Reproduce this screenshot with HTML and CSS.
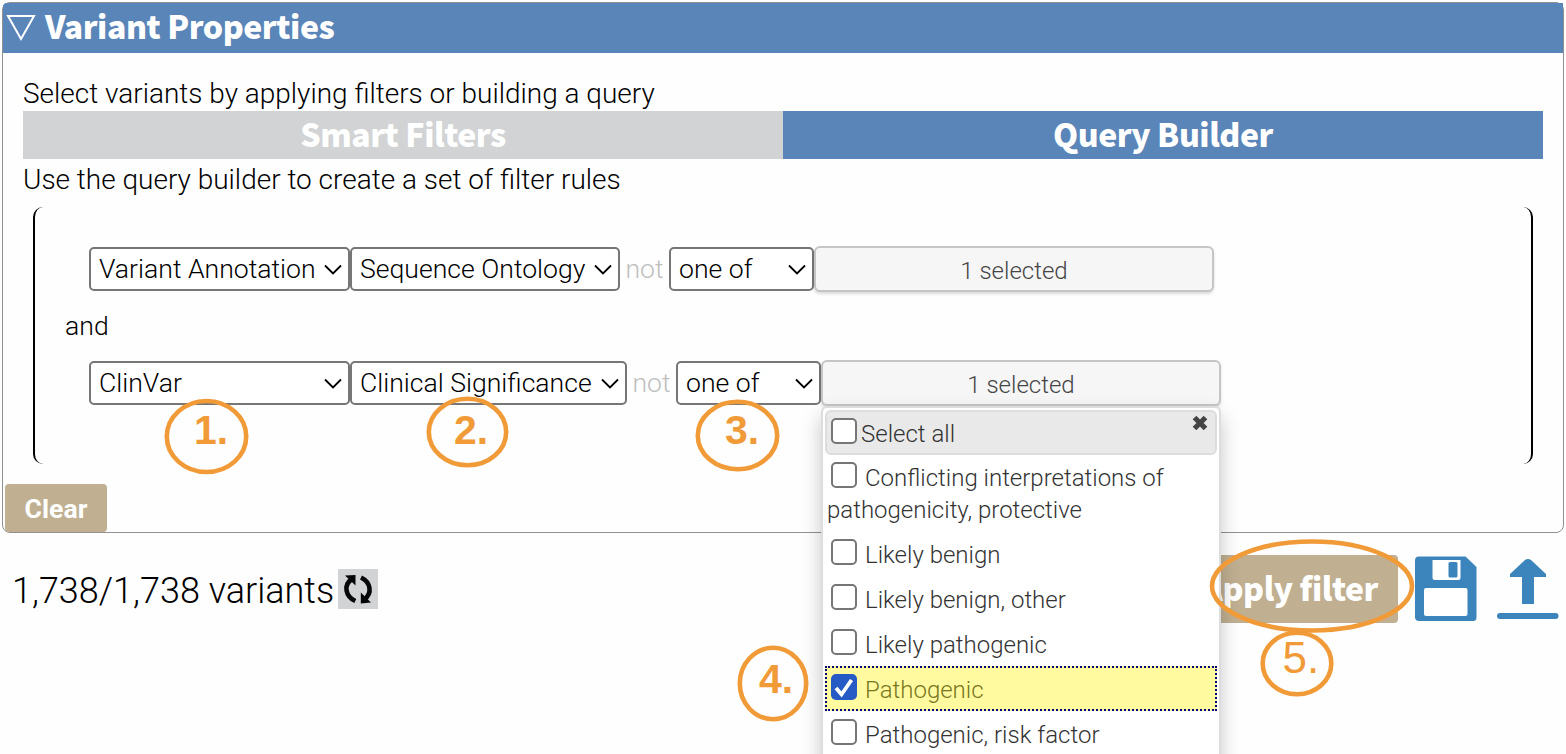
FILE: index.html
```html
<!DOCTYPE html>
<html lang="en">
<head>
<meta charset="utf-8">
<title>Variant Properties</title>
<link rel="stylesheet" href="styles.css">
</head>
<body>
<main class="page">
  <section class="panel">
    <header class="panel-head">
      <svg class="toggle" width="30" height="28" viewBox="0 0 30 28"><path d="M2 2H28L15 25Z" fill="none" stroke="#fff" stroke-width="2"/></svg>
      <h1 class="title">Variant Properties</h1>
    </header>
    <div class="panel-body">
      <p class="intro">Select variants by applying filters or building a query</p>
      <nav class="tabs">
        <div class="tab">Smart Filters</div>
        <div class="tab active">Query Builder</div>
      </nav>
      <p class="hint">Use the query builder to create a set of filter rules</p>
      <div class="group">
        <div class="rule">
          <div class="select w-source"><span>Variant Annotation</span><svg class="chev" viewBox="0 0 18 12"><path d="M1 1.5L9 9.5L17 1.5"/></svg></div>
          <div class="select w-so"><span>Sequence Ontology</span><svg class="chev" viewBox="0 0 18 12"><path d="M1 1.5L9 9.5L17 1.5"/></svg></div>
          <span class="not">not</span>
          <div class="select w-op"><span>one of</span><svg class="chev" viewBox="0 0 18 12"><path d="M1 1.5L9 9.5L17 1.5"/></svg></div>
          <div class="multi">1 selected</div>
        </div>
        <div class="and">and</div>
        <div class="rule">
          <div class="select w-source"><span>ClinVar</span><svg class="chev" viewBox="0 0 18 12"><path d="M1 1.5L9 9.5L17 1.5"/></svg></div>
          <div class="select w-cs"><span>Clinical Significance</span><svg class="chev" viewBox="0 0 18 12"><path d="M1 1.5L9 9.5L17 1.5"/></svg></div>
          <span class="not">not</span>
          <div class="select w-op"><span>one of</span><svg class="chev" viewBox="0 0 18 12"><path d="M1 1.5L9 9.5L17 1.5"/></svg></div>
          <div class="multi">1 selected</div>
        </div>
      </div>
    </div>
    <button class="clear">Clear</button>
  </section>

  <footer class="bar">
    <span class="count">1,738/1,738 variants</span>
    <span class="reload"><svg width="40" height="40" viewBox="0 0 40 40"><g fill="none" stroke="#060608" stroke-width="4.6"><path d="M17.3 32C7.500 27.500 5 16 14 10"/><path d="M23 8.500C32.500 13 35 24.500 26 30.500"/></g><path d="M7 6.500L17.500 6V16.500Z" fill="#060608"/><path d="M33 33.500L22.800 34.500V23.500Z" fill="#060608"/></svg></span>
    <button class="apply">Apply filter</button>
    <svg class="save" width="62" height="66" viewBox="0 0 62 66"><path d="M4 .5H50.500L61.500 11V61.500Q61.500 65 58 65H4Q0 65 0 61V4.500Q0 .5 4 .5Z" fill="#3b85bc"/><path d="M17.500 4H45.500V21.500Q45.500 24 43 24H20Q17.500 24 17.500 21.500Z" fill="#fff"/><rect x="33.500" y="6" width="9" height="15.500" rx="1.500" fill="#3b85bc"/><rect x="9" y="32" width="43.500" height="28" rx="2" fill="#fff"/></svg>
    <svg class="upload" width="62" height="62" viewBox="0 0 62 62"><path d="M28 1Q31 -1 34 1L49 15V18H37V45H25V18H13V15Z" fill="#3b85bc"/><rect x="0" y="54" width="61.500" height="6" rx="3" fill="#3b85bc"/></svg>
  </footer>

  <div class="menu">
    <div class="menu-head"><i class="box"></i><span>Select all</span><svg class="close" width="16" height="16" viewBox="0 0 16 16"><path d="M2.500 2.500L13.500 13.500M13.500 2.500L2.500 13.500" stroke="#454545" stroke-width="5.200"/></svg></div>
    <div class="opt two-line"><i class="box"></i>Conflicting interpretations of<br>pathogenicity, protective</div>
    <div class="opt"><i class="box"></i>Likely benign</div>
    <div class="opt"><i class="box"></i>Likely benign, other</div>
    <div class="opt"><i class="box"></i>Likely pathogenic</div>
    <div class="opt picked"><i class="box on"><svg width="26" height="26" viewBox="0 0 26 26"><path d="M5 14L10.500 20.500L20.500 6" fill="none" stroke="#fff" stroke-width="3.800"/></svg></i>Pathogenic</div>
    <div class="opt"><i class="box"></i>Pathogenic, risk factor</div>
  </div>

  <svg class="notes" width="1566" height="754" viewBox="0 0 1566 754">
    <g fill="none" stroke="#f19a38" stroke-width="4.600">
      <ellipse cx="206.500" cy="436.500" rx="39.700" ry="35.500"/>
      <ellipse cx="467.500" cy="432" rx="38.700" ry="33.300"/>
      <ellipse cx="737.500" cy="435.500" rx="39.700" ry="33.700"/>
      <ellipse cx="773" cy="683.500" rx="33.200" ry="35.700"/>
      <ellipse cx="1312" cy="586" rx="100" ry="44.500"/>
      <ellipse cx="1297" cy="663.500" rx="34.300" ry="30.700"/>
    </g>
    <g class="num">
      <text x="194" y="444">1.</text>
      <text x="454" y="444">2.</text>
      <text x="725" y="444">3.</text>
      <text x="759" y="693">4.</text>
      <text class="thin" x="1282.500" y="672.500">5.</text>
    </g>
  </svg>
</main>
</body>
</html>
```
FILE: styles.css
```css
* { box-sizing: border-box; }
body { margin: 0; background: #fefefe; color: #000; font-family: Roboto, "Liberation Sans", sans-serif; font-weight: 300; font-size: 26.6px; }
p, h1 { margin: 0; font-weight: inherit; font-size: inherit; }
svg { display: block; flex: none; }
button { border: 0; font: inherit; color: #fff; background: #c0af91; padding: 0; }
.page { position: relative; width: 1566px; height: 754px; padding: 2px 2px 0; overflow: hidden; }

.panel { height: 531px; border: 1px solid #919191; border-radius: 8px; display: flex; flex-direction: column; }
.panel-head { height: 50px; background: #5a85b8; display: flex; align-items: center; padding-left: 3px; gap: 9px; border-radius: 4px 0 0 0; }
.title, .tab, .apply { font-family: "Noto Sans CJK SC", "Noto Sans", sans-serif; font-weight: 900; font-size: 32px; letter-spacing: -.45px; color: #fff; white-space: nowrap; }
.title { line-height: 44px; height: 50px; }
.panel-body { padding: 22px 20px 0; height: 431px; }
.intro { height: 36px; line-height: 38px; font-size: 27.98px; }
.tabs { display: flex; height: 48px; }
.tab { flex: 1; background: #d1d3d4; text-align: center; line-height: 44px; }
.tab.active { background: #5a85b8; }
.hint { height: 48px; line-height: 41px; font-size: 27.98px; }
.group { height: 257px; margin: 0 10px; padding: 39px 0 0 30px; border: solid #000; border-width: 0 2px; border-radius: 10px; }
.rule { display: flex; align-items: center; height: 46px; padding-left: 24px; white-space: nowrap; }
.select { display: flex; align-items: center; justify-content: space-between; height: 44px; border: 2px solid #767676; border-radius: 5px; background: #fff; padding: 0 6px 0 8px; }
.select span { line-height: 40px; }
.w-source { width: 261px; }
.w-so { width: 270px; }
.w-cs { width: 277px; }
.w-op { width: 145px; }
.chev { width: 18px; height: 12px; margin-top: 1px; fill: none; stroke: #000; stroke-width: 1.8; }
.not { width: 49px; line-height: 40px; text-align: center; color: #bfbfbf; }
.multi { width: 400px; height: 46px; border: 2px solid #c5c5c5; border-radius: 6px; background: #f6f6f6; color: #454545; text-align: center; font-size: 24px; line-height: 46px; box-shadow: 0 2px 3px rgba(0,0,0,.14); }
.and { height: 68px; line-height: 67px; }
.clear { width: 102px; height: 48px; margin-left: 2px; padding-top: 0; border-radius: 4px; font-weight: 700; font-size: 26.6px; }

.bar { display: flex; align-items: flex-start; padding-top: 22px; }
.count { margin-left: 10px; width: 326px; font-size: 36px; line-height: 72px; white-space: nowrap; }
.reload { margin-top: 14px; width: 40px; height: 40px; background: #d1d3d4; }
.apply { margin-left: auto; width: 217px; height: 68px; border-radius: 4px; line-height: 64px; text-align: right; padding: 0 20px 4px 0; }
.save { margin: 1px 0 0 17px; }
.upload { margin: 4px 5px 0 20px; }

.menu { position: absolute; left: 821px; top: 406px; width: 400px; height: 380px; padding: 2px; border: 2px solid #ddd; border-radius: 6px; background: #fff; color: #333; font-size: 24px; box-shadow: 0 10px 20px rgba(0,0,0,.22); }
.menu-head { display: flex; height: 45px; align-items: center; padding-left: 4px; gap: 4px; border: 2px solid #ddd; border-radius: 6px; background: #e9e9e9; line-height: 46px; }
.menu-head span { padding-top: 2px; }
.menu-head .box { margin: -3px 0 0; }
.close { margin: -20px 7px 0 auto; }
.box { display: inline-block; flex: none; width: 26px; height: 26px; border: 2px solid #767676; border-radius: 5px; background: #fff; vertical-align: -2px; }
.box.on { border: 0; background: #265bc6; }
.opt { border: 2px solid transparent; padding: 6px 0 0; line-height: 32px; white-space: nowrap; height: 45px; }
.opt .box { margin: 0 8px 0 4px; }
.opt.two-line { height: 76px; padding-top: 5px; }
.opt.picked { border: 2px dotted #000080; background: #fffa9f; color: #777620; }

.notes { position: absolute; left: 0; top: 0; }
.num { fill: #f19a38; font-family: "Liberation Sans", Arial, sans-serif; font-size: 41px; font-weight: 700; }
.thin { font-size: 44px; font-weight: 400; }
```
